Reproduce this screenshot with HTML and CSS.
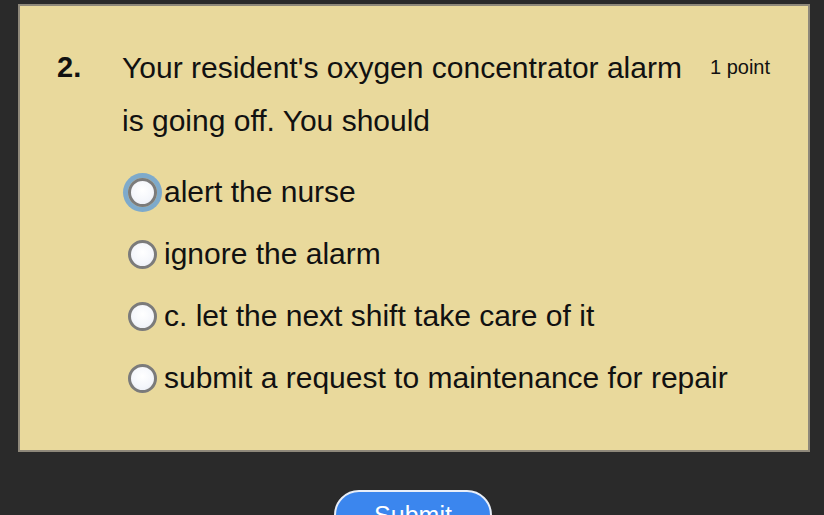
FILE: index.html
```html
<!DOCTYPE html>
<html lang="en">
<head>
<meta charset="utf-8">
<title>Quiz</title>
<link rel="stylesheet" href="styles.css">
</head>
<body>
<div class="page">
  <section class="card">
    <div class="question">
      <span class="qnum">2.</span>
      <p class="qtext">Your resident's oxygen concentrator alarm is going off. You should</p>
      <span class="points">1 point</span>
    </div>
    <ul class="options">
      <li class="option"><span class="radio focused"></span><span class="label">alert the nurse</span></li>
      <li class="option"><span class="radio"></span><span class="label">ignore the alarm</span></li>
      <li class="option"><span class="radio"></span><span class="label">c. let the next shift take care of it</span></li>
      <li class="option"><span class="radio"></span><span class="label">submit a request to maintenance for repair</span></li>
    </ul>
  </section>
  <div class="actions">
    <button class="submit">Submit</button>
  </div>
</div>
</body>
</html>
```
FILE: styles.css
```css
html, body {
  margin: 0;
  padding: 0;
  background: #2a2a2a;
  font-family: "Liberation Sans", Arial, sans-serif;
  color: #111;
  overflow: hidden;
}
.page {
  width: 824px;
  height: 515px;
  padding-top: 4px;
  box-sizing: border-box;
}
.card {
  margin-left: 18px;
  width: 792px;
  height: 448px;
  box-sizing: border-box;
  background: #e9d99c;
  border: 2px solid #8e887a;
  padding: 35px 0 0 37px;
}
.question {
  display: flex;
  align-items: flex-start;
}
.qnum {
  font-weight: bold;
  font-size: 29px;
  line-height: 53px;
  width: 65px;
  flex: none;
}
.qtext {
  margin: 0;
  font-size: 30px;
  line-height: 53px;
  width: 585px;
  flex: none;
}
.points {
  font-size: 20px;
  line-height: 24px;
  margin-top: 14px;
  margin-left: 3px;
}
.options {
  list-style: none;
  margin: 14px 0 0 71px;
  padding: 0;
}
.option {
  display: flex;
  align-items: center;
  height: 62px;
  font-size: 30px;
}
.radio {
  width: 29px;
  height: 29px;
  box-sizing: border-box;
  border-radius: 50%;
  border: 3px solid #7b7b7b;
  background: radial-gradient(circle at 50% 40%, #ffffff 0%, #f4f6fb 60%, #e6e9f2 100%);
  flex: none;
  margin-right: 7px;
}
.radio.focused {
  box-shadow: 0 0 0 5px #7eaacb;
}
.label {
  line-height: 62px;
}
.actions {
  display: flex;
  justify-content: center;
  padding-top: 38px;
  padding-left: 2px;
}
.submit {
  width: 158px;
  height: 50px;
  border-radius: 25px;
  border: 2px solid #e8eef8;
  background: #3b86ee;
  color: #fff;
  font-family: "Liberation Sans", Arial, sans-serif;
  font-size: 25px;
  padding: 9px 0 0;
  display: flex;
  justify-content: center;
  align-items: flex-start;
}
```
